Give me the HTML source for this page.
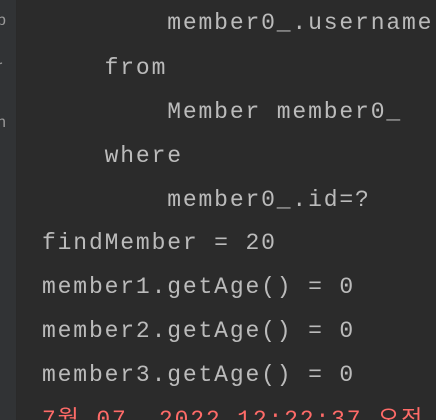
<!DOCTYPE html>
<html><head><style>
html,body{margin:0;padding:0;width:436px;height:420px;overflow:hidden;}
body{background:#2b2b2b;position:relative;}
.side{position:absolute;left:0;top:0;width:16px;height:420px;background:#313335;border-right:1px solid #2a2a2a;}
.l{position:absolute;left:42px;font-family:"Liberation Mono","Noto Sans CJK KR",monospace;font-size:23px;letter-spacing:1.85px;color:#bbbbbb;white-space:pre;line-height:30px;}
.r{color:#ff6b68;}
.g{position:absolute;left:0;font-family:"Liberation Sans",sans-serif;font-size:16px;color:#9a9a9a;}
</style></head><body>
<div class="side"></div>
<div class="g" style="top:12px;left:-3px">b</div>
<div class="g" style="top:58px;left:-3px">r</div>
<div class="g" style="top:114px;left:-3px">n</div>
<div class="l" style="top:8px">        member0_.username</div>
<div class="l" style="top:53px">    from</div>
<div class="l" style="top:97px">        Member member0_</div>
<div class="l" style="top:141px">    where</div>
<div class="l" style="top:185px">        member0_.id=?</div>
<div class="l" style="top:228px">findMember = 20</div>
<div class="l" style="top:272px">member1.getAge() = 0</div>
<div class="l" style="top:316px">member2.getAge() = 0</div>
<div class="l" style="top:360px">member3.getAge() = 0</div>
<div class="l r" style="top:405px">7월 07, 2022 12:22:37 오전</div>
</body></html>
